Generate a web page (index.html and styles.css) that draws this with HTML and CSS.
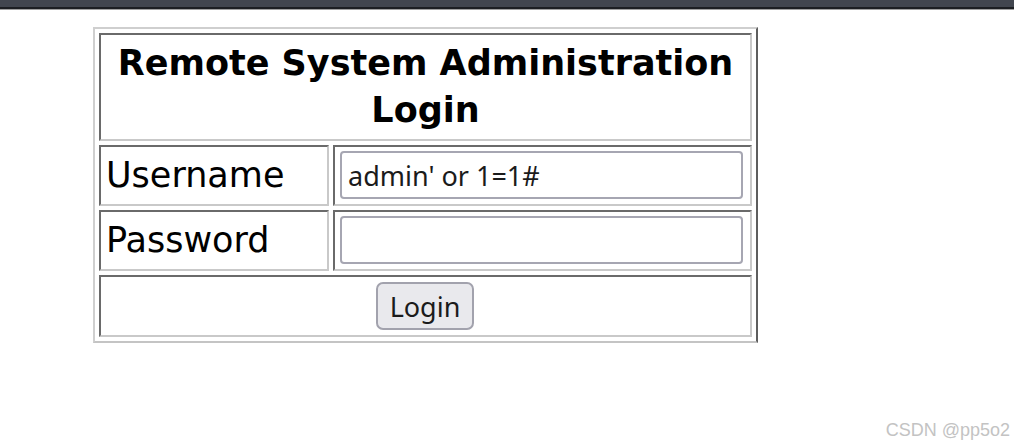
FILE: index.html
```html
<!DOCTYPE html>
<html>
<head>
<meta charset="utf-8">
<title>Remote System Administration Login</title>
<link rel="stylesheet" href="styles.css">
</head>
<body>
<div class="topbar"></div>
<main class="page">
  <form class="login-form">
    <table class="login-table">
      <tr>
        <th colspan="2" class="title-cell">Remote System Administration<br>Login</th>
      </tr>
      <tr>
        <td class="label-cell">Username</td>
        <td class="field-cell"><input class="field" type="text" value="admin' or 1=1#"></td>
      </tr>
      <tr>
        <td class="label-cell">Password</td>
        <td class="field-cell"><input class="field" type="password" value=""></td>
      </tr>
      <tr>
        <td colspan="2" class="button-cell"><button type="button" class="btn">Login</button></td>
      </tr>
    </table>
  </form>
</main>
<div class="watermark">CSDN @pp5o2</div>
</body>
</html>
```

FILE: styles.css
```css
html, body {
  margin: 0;
  padding: 0;
  background: #ffffff;
}

body {
  width: 1014px;
  height: 448px;
  overflow: hidden;
  position: relative;
  font-family: "DejaVu Sans", sans-serif;
  color: #000;
}

.topbar {
  height: 7px;
  background: #42464f;
  border-bottom: 2px solid #1d1f23;
  box-shadow: 0 1px 0 #a0a0a0;
}

.page {
  padding: 18px 0 0 93px;
}

.login-form {
  margin: 0;
}

.login-table {
  border-collapse: separate;
  border-spacing: 4px;
  border-style: solid;
  border-width: 2px;
  border-color: #cfcfcf #5e5e5e #c4c4c4 #cfcfcf;
}

.login-table th,
.login-table td {
  border-style: solid;
  border-width: 2px;
  border-color: #6a6a6a #c9c9c9 #c9c9c9 #6a6a6a;
  padding: 5px;
}

.title-cell {
  font-size: 35px;
  font-weight: bold;
  line-height: 47px;
  text-align: center;
  padding: 4px 5px 5px;
}

.login-table .label-cell {
  width: 216px;
  font-size: 35px;
  line-height: 40px;
  text-align: left;
  vertical-align: middle;
  padding: 4px 5px 5px;
}

.login-table .field-cell {
  width: 405px;
  padding: 4px 5px 5px;
}

.field {
  display: block;
  box-sizing: border-box;
  width: 403px;
  height: 48px;
  margin: 0;
  padding: 0 6px;
  border: 2px solid #a6a6b2;
  border-radius: 4px;
  background: #fff;
  font-family: "Noto Sans", sans-serif;
  font-size: 27px;
  color: #1b1b1b;
  outline: none;
}

.button-cell {
  text-align: center;
}

.btn {
  box-sizing: border-box;
  width: 98px;
  height: 48px;
  margin: 0 0 0 -1px;
  padding: 0;
  border: 2px solid #a2a2ad;
  border-radius: 7px;
  background: #e9e9ed;
  font-family: "Noto Sans", sans-serif;
  font-size: 27px;
  color: #1b1b1b;
  vertical-align: middle;
}

.watermark {
  position: absolute;
  right: 4px;
  bottom: 7px;
  font-family: "Liberation Sans", Arial, sans-serif;
  font-size: 18px;
  color: #c3c3c3;
}
```
